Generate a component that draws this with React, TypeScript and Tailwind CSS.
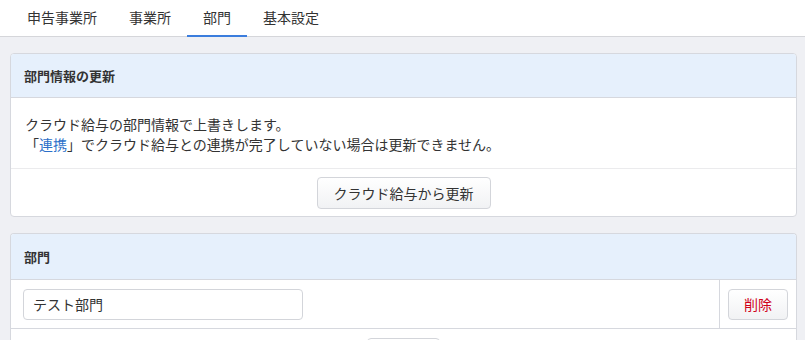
import React from "react";

const font = { fontFamily: '"Noto Sans CJK JP", "Noto Sans", sans-serif' };

export default function App() {
  return (
    <div className="min-h-[340px] bg-[#eff0f4] text-[#333] text-[14px]" style={font}>
      <div className="flex h-[37px] border-b border-[#d5d6da] bg-white pl-[11px]">
        <div className="px-4 leading-[35px]">申告事業所</div>
        <div className="px-4 leading-[35px]">事業所</div>
        <div className="-mb-px border-b-2 border-[#3b7ddd] px-4 leading-[35px]">部門</div>
        <div className="px-4 leading-[35px]">基本設定</div>
      </div>

      <div className="ml-[10px] mr-[8px] pt-[16px] flex flex-col gap-[16px]">
        <div className="overflow-hidden rounded-[4px] border border-[#d6d8de] bg-white">
          <div className="h-[44px] border-b border-[#d6d8de] bg-[#e6f0fc] px-[13px] font-bold leading-[43px] text-[13px]">
            部門情報の更新
          </div>
          <div className="border-b border-[#ebebed] px-[14px] pt-[16px] pb-[14px] leading-[20px]">
            <div>クラウド給与の部門情報で上書きします。</div>
            <div>
              「<span className="text-[#2b6fc9]">連携</span>」でクラウド給与との連携が完了していない場合は更新できません。
            </div>
          </div>
          <div className="flex justify-center pt-[8px] pb-[7px]">
            <button className="h-[32px] w-[174px] rounded-[4px] border border-[#d3d5da] bg-gradient-to-b from-white to-[#f1f2f4] text-[#333]">
              クラウド給与から更新
            </button>
          </div>
        </div>

        <div className="overflow-hidden rounded-t-[4px] border border-b-0 border-[#d6d8de] bg-white">
          <div className="h-[46px] border-b border-[#d6d8de] bg-[#e6f0fc] px-[13px] font-bold leading-[45px] text-[13px]">
            部門
          </div>
          <div className="flex h-[49px] border-b border-[#d6d8de]">
            <div className="flex flex-1 items-center pl-[12px]">
              <div className="flex h-[31px] w-[280px] items-center rounded-[4px] border border-[#d3d5da] px-[9px]">
                テスト部門
              </div>
            </div>
            <div className="flex w-[77px] items-center justify-center border-l border-[#d6d8de]">
              <button className="h-[31px] w-[60px] rounded-[4px] border border-[#d3d5da] bg-gradient-to-b from-white to-[#f1f2f4] text-[#d0021b]">
                削除
              </button>
            </div>
          </div>
          <div className="flex h-[40px] justify-center pt-[9px]">
            <div className="h-[31px] w-[73px] rounded-[4px] border border-[#d3d5da]" />
          </div>
        </div>
      </div>
    </div>
  );
}
